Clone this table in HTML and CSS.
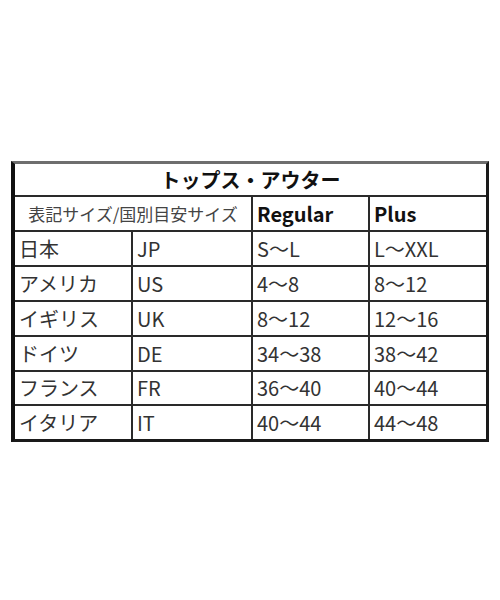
FILE: index.html
```html
<!DOCTYPE html>
<html lang="ja">
<head>
<meta charset="utf-8">
<link rel="stylesheet" href="styles.css">
</head>
<body>
<div class="page">
  <div class="size-table">
    <div class="cell title span4">トップス・アウター</div>
    <div class="cell sub span2">表記サイズ/国別目安サイズ</div>
    <div class="cell head">Regular</div>
    <div class="cell head last">Plus</div>

    <div class="cell">日本</div><div class="cell">JP</div><div class="cell">S～L</div><div class="cell last">L～XXL</div>
    <div class="cell">アメリカ</div><div class="cell">US</div><div class="cell">4～8</div><div class="cell last">8～12</div>
    <div class="cell">イギリス</div><div class="cell">UK</div><div class="cell">8～12</div><div class="cell last">12～16</div>
    <div class="cell">ドイツ</div><div class="cell">DE</div><div class="cell">34～38</div><div class="cell last">38～42</div>
    <div class="cell">フランス</div><div class="cell">FR</div><div class="cell">36～40</div><div class="cell last">40～44</div>
    <div class="cell end">イタリア</div><div class="cell end">IT</div><div class="cell end">40～44</div><div class="cell last end">44～48</div>
  </div>
</div>
</body>
</html>
```

FILE: styles.css
```css
html, body {
  margin: 0;
  padding: 0;
  background: #ffffff;
}

.page {
  width: 500px;
  height: 600px;
  padding: 161px 0 0 11px;
  box-sizing: border-box;
  font-family: "Noto Sans CJK JP", "Noto Sans", sans-serif;
}

.size-table {
  width: 478px;
  box-sizing: border-box;
  display: grid;
  grid-template-columns: 118px 120px 117px 116px;
  grid-template-rows: 33px 35px 35px 35px 35px 35px 34px 33px;
  border-left: 4px solid #111;
  border-right: 3px solid #1a1a1a;
  border-top: 3px solid #6e6e6e;
  border-bottom: 3px solid #1a1a1a;
}

.cell {
  box-sizing: border-box;
  border-right: 2px solid #2a2a2a;
  border-bottom: 2px solid #2a2a2a;
  display: flex;
  align-items: center;
  padding-left: 4px;
  font-size: 20px;
  color: #333;
  line-height: 1;
  white-space: nowrap;
}

.cell.last {
  border-right: none;
}

.cell.end {
  border-bottom: none;
}

.span4 {
  grid-column: span 4;
  border-right: none;
}

.span2 {
  grid-column: span 2;
}

.title {
  justify-content: center;
  padding-left: 0;
  font-weight: bold;
  color: #111;
  font-size: 20px;
}

.sub {
  justify-content: center;
  padding-left: 0;
  font-size: 17px;
  color: #444;
}

.head {
  font-weight: bold;
  color: #111;
}
```
